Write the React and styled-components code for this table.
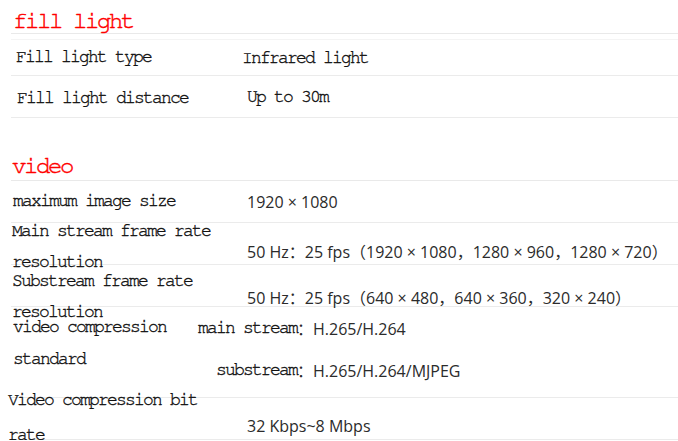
import React from "react";
import styled, { createGlobalStyle, css } from "styled-components";

const Global = createGlobalStyle`
  html, body { margin: 0; padding: 0; background: #fff; }
  * { box-sizing: border-box; }
`;

const SANS = `"Open Sans", "Noto Sans CJK SC", sans-serif`;

const monoText = css`
  font-family: "FreeMono", "Liberation Mono", monospace;
  font-size: 18px;
  letter-spacing: -1.8px;
  color: #111;
  -webkit-text-stroke: 0.35px #111;
`;

const Page = styled.div`
  padding-left: 11px;
  width: 678px;
  overflow: hidden;
`;

const Title = styled.h2`
  margin: ${(p) => p.$mt}px 0 0 0;
  padding: 10px 0 ${(p) => p.$pb}px ${(p) => p.$indent}px;
  font-family: "FreeMono", "Liberation Mono", monospace;
  font-weight: normal;
  font-size: 24px;
  letter-spacing: -2.4px;
  line-height: 23px;
  color: #ff0000;
  -webkit-text-stroke: 0.45px #ff0000;
  border-bottom: 1px solid #e9e9e9;
`;

const Table = styled.div`
  margin-top: ${(p) => p.$mt}px;
  border-top: ${(p) => (p.$top ? "1px solid #f4f4f4" : "none")};
`;

const Row = styled.div`
  display: grid;
  grid-template-columns: ${(p) => p.$lw || 236}px 1fr;
  align-items: center;
  height: ${(p) => p.$h || 42}px;
  border-bottom: 1px solid #ebebeb;
`;

const Label = styled.div`
  ${monoText};
  align-self: ${(p) => (p.$top !== undefined ? "start" : "center")};
  margin-top: ${(p) => p.$top || 0}px;
  margin-left: ${(p) => p.$indent || 0}px;
  padding-right: 10px;
  line-height: ${(p) => p.$lh || 31}px;
`;

const MonoValue = styled.div`
  ${monoText};
  margin-left: ${(p) => p.$indent || 0}px;
  white-space: nowrap;
`;

const Value = styled.div`
  font-family: ${SANS};
  font-size: 16px;
  color: #2b2b2b;
  white-space: nowrap;
`;

const SubList = styled.div`
  align-self: start;
  display: flex;
  flex-direction: column;
`;

const SubRow = styled.div`
  display: grid;
  grid-template-columns: 100px 1fr;
  align-items: center;
  height: 42px;
`;

const SubKey = styled.span`
  ${monoText};
  text-align: right;
`;

const SubVal = styled.span`
  font-family: ${SANS};
  font-size: 16px;
  color: #2b2b2b;
  white-space: nowrap;
`;

export default function App() {
  return (
    <Page>
      <Global />
      <Title $mt={0} $pb={0} $indent={2}>fill light</Title>
      <Table $mt={5} $top>
        <Row $h={36}>
          <Label $indent={5}>Fill light type</Label>
          <MonoValue $indent={-5}>Infrared light</MonoValue>
        </Row>
        <Row>
          <Label $indent={6} $top={7}>Fill light distance</Label>
          <MonoValue>Up to 30m</MonoValue>
        </Row>
      </Table>

      <Title $mt={27} $pb={2} $indent={1}>video</Title>
      <Table $mt={0}>
        <Row>
          <Label $indent={2}>maximum image size</Label>
          <Value>1920 × 1080</Value>
        </Row>
        <Row>
          <Label $indent={1} $top={-7}>Main stream frame rate resolution</Label>
          <Value>50 Hz：25 fps（1920 × 1080，1280 × 960，1280 × 720）</Value>
        </Row>
        <Row>
          <Label $indent={1} $top={1}>Substream frame rate resolution</Label>
          <Value>50 Hz：25 fps（640 × 480，640 × 360，320 × 240）</Value>
        </Row>
        <Row $h={91} $lw={186}>
          <Label $indent={2} $top={4} $lh={32}>video compression standard</Label>
          <SubList>
            <SubRow>
              <SubKey>main stream</SubKey>
              <SubVal>：H.265/H.264</SubVal>
            </SubRow>
            <SubRow>
              <SubKey>substream</SubKey>
              <SubVal>：H.265/H.264/MJPEG</SubVal>
            </SubRow>
          </SubList>
        </Row>
        <Row>
          <Label $indent={-3} $top={-15} $lh={35}>Video compression bit rate</Label>
          <Value>32 Kbps~8 Mbps</Value>
        </Row>
      </Table>
    </Page>
  );
}
